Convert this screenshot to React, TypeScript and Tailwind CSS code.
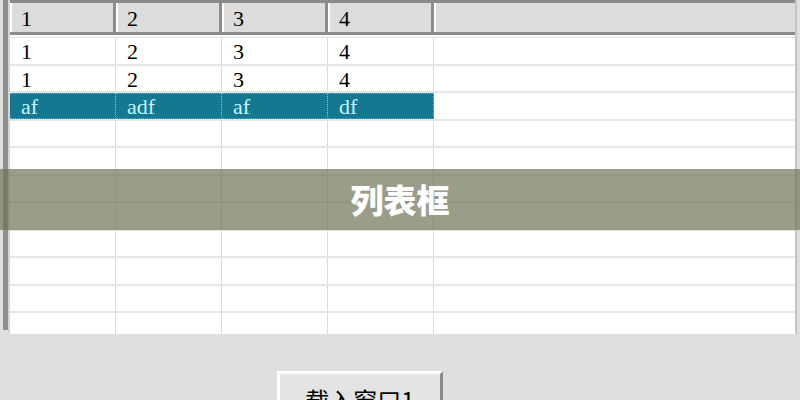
import React from "react";

const rows: string[][] = [
  ["1", "2", "3", "4"],
  ["1", "2", "3", "4"],
  ["af", "adf", "af", "df"],
  [], [], [], [], [], [], [], [],
];

export default function App() {
  return (
    <div className="relative w-[800px] h-[400px] overflow-hidden bg-[#dfdfdf]" style={{ fontFamily: '"Liberation Serif", serif' }}>
      {/* list view */}
      <div className="flex ml-[3px] w-[794px] h-[336px]">
        <div className="w-[5px] h-[330px] bg-[#8e8e8e]" />
        <div className="w-[2px] h-[333px] bg-[#d6d6d6]" />
        <div className="flex flex-col w-[785px] h-[334px] bg-white overflow-hidden">
          {/* header */}
          <div className="flex h-[35px] shrink-0 bg-[#dcdcdc] border-t-[3px] border-b-[3px] border-t-[#8a8a8a] border-b-[#8c8c8c]">
            {["1", "2", "3", "4"].map((h, i) => (
              <div key={i} className="w-[106px] shrink-0 flex items-center pl-[9px] pt-[3px] text-[22px] leading-none text-black border-l-2 border-l-white border-r-[3px] border-r-[#8c8c8c]">
                {h}
              </div>
            ))}
            <div className="flex-1 border-l-2 border-l-white" />
          </div>
          {/* rows */}
          <div className="mt-[2px] border-t border-[#e4e4e4]">
            {rows.map((r, ri) => {
              const sel = ri === 2;
              return (
                <div key={ri} className="flex h-[27.5px] shrink-0 border-b-2 border-[#e6e6e6]">
                  {[0, 1, 2, 3].map((ci) => (
                    <div
                      key={ci}
                      className={
                        sel
                          ? "w-[106px] shrink-0 flex items-center pl-[11px] pt-[2px] text-[22px] leading-none bg-[#137890] text-[#c9f4ff] border-r border-[#7fc9dc] border-y border-y-[#5fb0c4] border-dotted"
                          : "w-[106px] shrink-0 flex items-center pl-[11px] pt-[3px] text-[22px] leading-none text-black border-r border-[#dadada]"
                      }
                    >
                      {r[ci] ?? ""}
                    </div>
                  ))}
                  <div className="flex-1" />
                </div>
              );
            })}
          </div>
        </div>
        <div className="w-[2px] h-[334px] bg-[#c4c4c4]" />
      </div>

      {/* button */}
      <div className="ml-[277px] mt-[35px] w-[166px] h-[60px] bg-[#e4e4e4] border-t-[3px] border-l-[3px] border-t-white border-l-white border-r-[3px] border-r-[#8a8a8a] flex justify-center pt-[14px]">
        <span className="text-[24px] leading-none text-black" style={{ fontFamily: '"Noto Sans CJK SC", sans-serif' }}>
          载入窗口1
        </span>
      </div>

      {/* overlay band */}
      <div className="absolute left-0 right-0 top-[169px] h-[61px] bg-[rgba(110,115,88,0.7)] flex items-center justify-center">
        <span className="text-white text-[33px] font-black leading-none" style={{ fontFamily: '"Noto Sans CJK SC", sans-serif' }}>
          列表框
        </span>
      </div>
    </div>
  );
}
